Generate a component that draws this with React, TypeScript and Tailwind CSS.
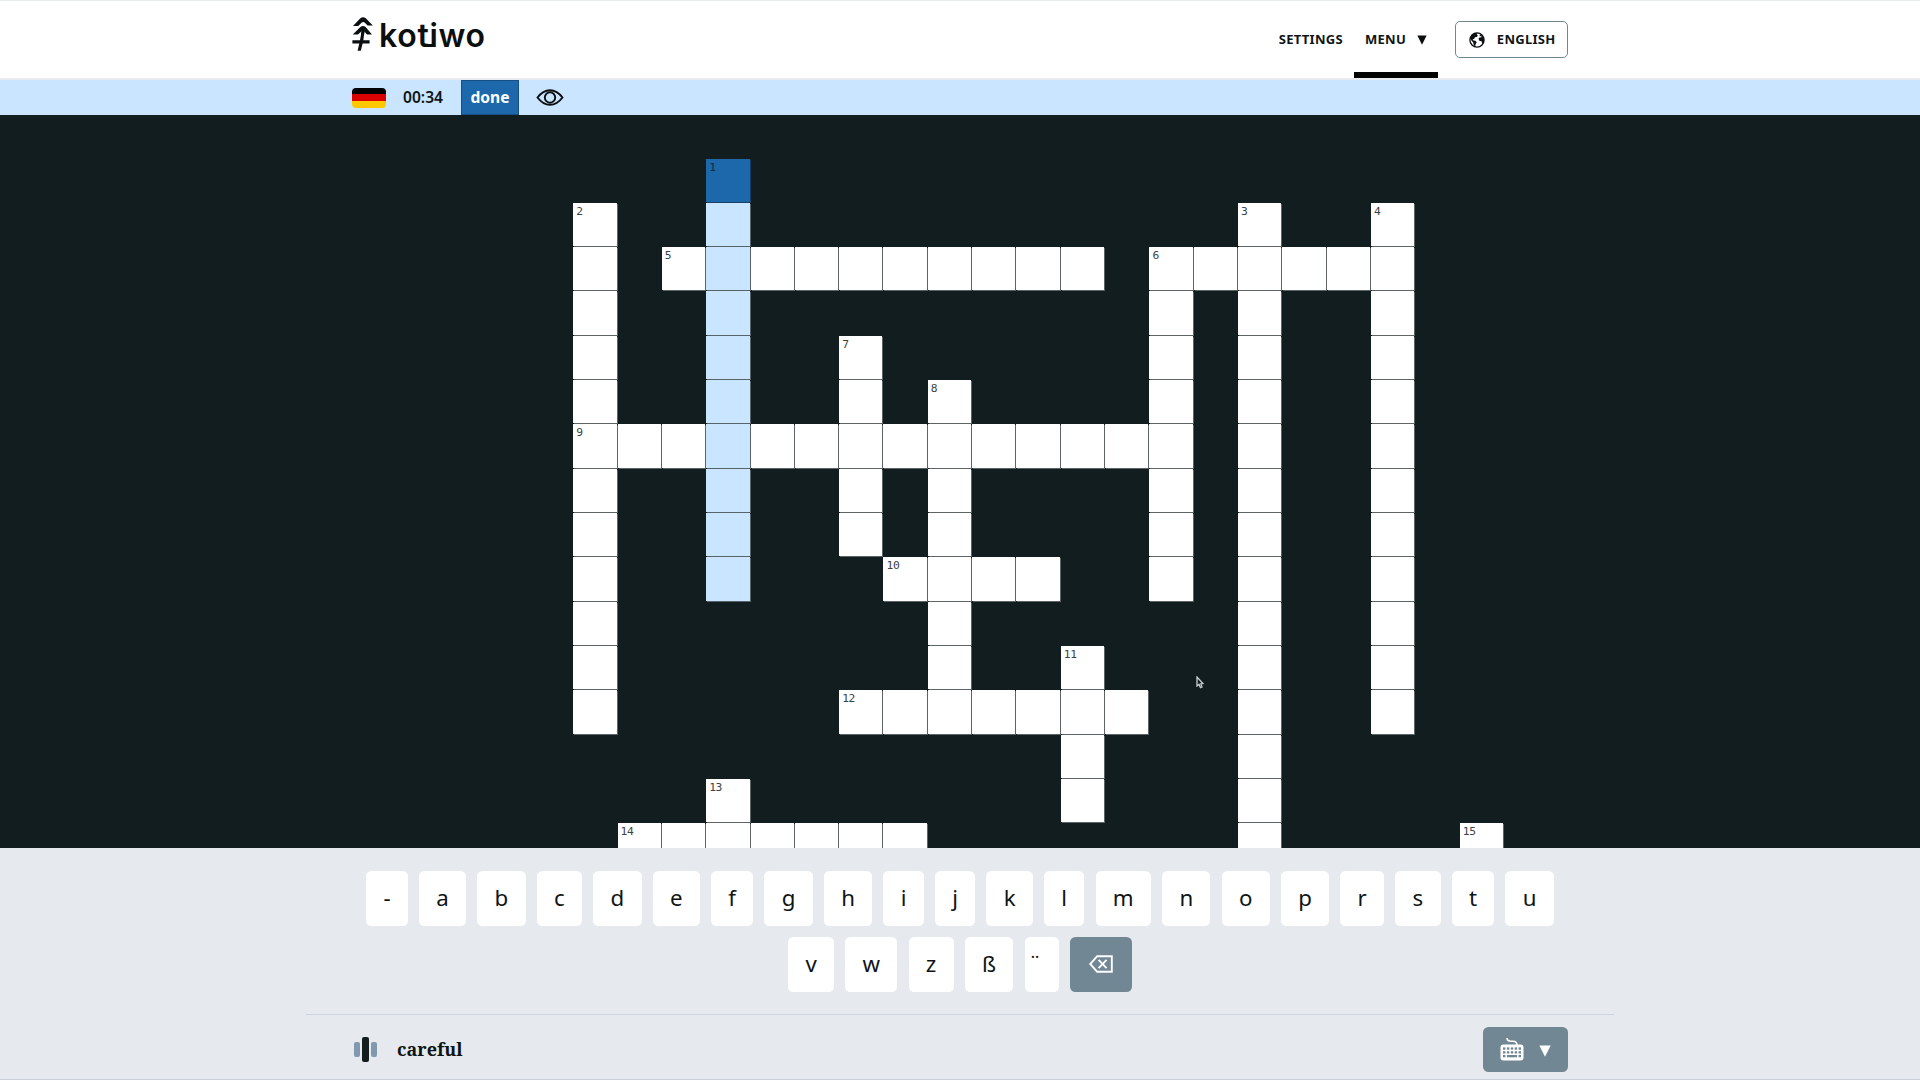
type Word = { n: number; c: number; r: number; len: number; down?: boolean };

const words: Word[] = [
  { n: 2, c: 0, r: 1, len: 12, down: true },
  { n: 3, c: 15, r: 1, len: 15, down: true },
  { n: 4, c: 18, r: 1, len: 12, down: true },
  { n: 5, c: 2, r: 2, len: 10 },
  { n: 6, c: 13, r: 2, len: 6 },
  { n: 6, c: 13, r: 2, len: 8, down: true },
  { n: 7, c: 6, r: 4, len: 5, down: true },
  { n: 8, c: 8, r: 5, len: 8, down: true },
  { n: 9, c: 0, r: 6, len: 14 },
  { n: 10, c: 7, r: 9, len: 4 },
  { n: 11, c: 11, r: 11, len: 4, down: true },
  { n: 12, c: 6, r: 12, len: 7 },
  { n: 13, c: 3, r: 14, len: 2, down: true },
  { n: 14, c: 1, r: 15, len: 7 },
  { n: 15, c: 20, r: 15, len: 1, down: true },
];

const COLS = 21;
const ROWS = 16;
const cells: { on: boolean; n?: number; active?: boolean; current?: boolean }[] = Array.from(
  { length: COLS * ROWS },
  () => ({ on: false }),
);
for (const w of words) {
  for (let i = 0; i < w.len; i++) {
    const cell = cells[(w.r + (w.down ? i : 0)) * COLS + w.c + (w.down ? 0 : i)];
    cell.on = true;
    if (i === 0) cell.n = w.n;
  }
}
for (let r = 0; r < 10; r++) {
  const cell = cells[r * COLS + 3];
  cell.on = true;
  if (r === 0) {
    cell.current = true;
    cell.n = 1;
  } else cell.active = true;
}

function Tree() {
  return (
    <svg className="mt-[15px] h-[36px] w-[22px]" viewBox="0 0 22 36" fill="#0b0f10">
      <path d="M1 10 8.4 2.2Q11 .2 13.8 2.2L20.8 9.6H15.6L12.6 6.4Q11.2 5.4 9.8 6.4L6.2 10z" />
      <path d="M.8 18.6 8.4 11Q11 9 13.6 11L20 18.4H15L12.4 15.4 12 18H9L9.6 15.2 6 18.6z" />
      <path d="M9.6 15.5H12.5L11.3 24.2H17.6V27.4H10.6L8.8 34.8H5.6L7.3 27.4H.4V24.2H8z" />
    </svg>
  );
}

function Globe() {
  return (
    <svg className="h-4 w-4" viewBox="0 0 16 16">
      <circle cx="8" cy="8" r="7.1" fill="#fff" stroke="#0b0f10" strokeWidth="1.3" />
      <path
        fill="#0b0f10"
        d="M1 6.5 3 2.8 6.2 1l2.3.3-.7 1.5 1.2.9-1.4 1.4-1.8.2-.6 1.6-1.6.3.8 1.3 2 .2 1.3 1.5-1 1.7-.5 2.6-1.6-1.5-.3-2.4-1.7-1.8zM11 2l2.5 2 1.5 3v3l-1.7 1.4-.8-2.2-2.2-.4-.8-2.2 1.5-1.4 1.5.2-.3-1.3-1.6.1z"
      />
    </svg>
  );
}

function Key({ k }: { k: string }) {
  return (
    <div className="flex h-[54.5px] items-center rounded-[5.5px] bg-white px-[17.3px] text-[22.3px] leading-none">
      {k}
    </div>
  );
}

function Keyboard() {
  const keys = [0, 1, 2, 3, 4].flatMap((i) => [
    { x: 3 + i * 3.9, y: 10.4 },
    { x: 3 + i * 3.9, y: 14.2 },
  ]);
  return (
    <svg className="-mt-px h-[24px] w-[24px]" viewBox="0 0 24 24">
      <path d="M7 1q0 3.2 4 3.2h2q4 0 4 4" fill="none" stroke="#fff" strokeWidth="1.6" />
      <rect x=".5" y="7.6" width="23" height="15.9" rx="3" fill="#fff" />
      <g fill="#728794">
        {keys.map((k, i) => (
          <rect key={i} x={k.x} y={k.y} width={2.4} height="2.3" />
        ))}
        <rect x="3" y="18" width="2.4" height="2.3" />
        <rect x="6.9" y="18" width="10.2" height="2.3" />
        <rect x="18.6" y="18" width="2.4" height="2.3" />
      </g>
    </svg>
  );
}

export default function App() {
  return (
    <div className="relative flex h-[1080px] w-[1920px] flex-col overflow-hidden bg-[#e6eaef] font-['Noto_Sans',sans-serif] text-[#0f1516]">
      <header className="flex h-[80px] shrink-0 justify-between border-t border-b-2 border-[#e8ebef] bg-white pr-[352px] pl-[352px]">
        <div className="flex">
          <Tree />
          <div className="relative mt-[12px] ml-[5px] h-10 font-['Inter',sans-serif] text-[32px] leading-[46px] font-semibold tracking-[0.7px] text-[#0b0f10]">
            kotiwo
            <span className="absolute top-[30.5px] left-[46px] h-[3.5px] w-[9px] bg-[#0b0f10]" />
          </div>
        </div>
        <div className="flex text-[13px] font-bold tracking-[0.28px]">
          <div className="mt-[28px] h-5 leading-5">SETTINGS</div>
          <div className="ml-[11px] flex h-[77px] border-b-[6px] border-black px-[11px] pt-[28px] leading-5">
            MENU
            <svg className="mt-[6px] ml-[11px] h-[10px] w-[10px]" viewBox="0 0 10 10">
              <path d="M.4.5h9.2L5 9.8z" fill="#0b0f10" />
            </svg>
          </div>
          <div className="mt-[20px] ml-[17px] flex h-[37px] w-[113px] items-center justify-between rounded-[5px] border border-[#728794] pr-[11.5px] pl-[13px]">
            <Globe />
            <span>ENGLISH</span>
          </div>
        </div>
      </header>

      <div className="flex h-[35px] shrink-0 items-center bg-[#cae5ff] pl-[352px]">
        <div className="flex h-[20px] w-[34px] flex-col overflow-hidden rounded-[4px]">
          <div className="h-[6px] bg-black" />
          <div className="h-[7px] bg-[#d80000]" />
          <div className="h-[7px] bg-[#ffc800]" />
        </div>
        <div className="ml-[17px] w-[58px] text-[15.6px] font-semibold">00:34</div>
        <div className="flex h-[35px] w-[58px] items-center justify-center border border-[#174f85] bg-[#1d67ab] text-[15.6px] font-bold text-white">
          done
        </div>
        <svg className="ml-[17px] h-[17px] w-[28px]" viewBox="0 0 28 17" fill="none" stroke="#0b0f10" strokeWidth="1.9">
          <path d="M1.5 8.5Q7 1.2 14 1.2t12.5 7.3Q21 15.8 14 15.8T1.5 8.5z" />
          <circle cx="14" cy="8.5" r="5.2" />
        </svg>
      </div>

      <main className="h-[733px] shrink-0 overflow-hidden bg-[#121d1f] pt-[43.5px] pl-[573.2px]">
        <div className="grid w-max auto-rows-[43.33px] grid-cols-[repeat(21,43.33px)] gap-px">
          {cells.map((cell, i) =>
            cell.on ? (
              <div
                key={i}
                className={
                  "pt-[2px] pl-[3px] font-['DejaVu_Sans_Mono',monospace] text-[11.3px] leading-[13px] tracking-[-0.4px] " +
                  (cell.current
                    ? 'bg-[#1d67ab] text-[#0c2c4c] shadow-[1px_1px_0_#184067]'
                    : cell.active
                      ? 'bg-[#cae5ff] shadow-[1px_1px_0_#566369]'
                      : 'bg-white text-[#3b4345] shadow-[1px_1px_0_#5c6466]')
                }
              >
                {cell.n}
              </div>
            ) : (
              <div key={i} />
            ),
          )}
        </div>
      </main>

      <section className="flex h-[166px] shrink-0 flex-col items-center gap-[11.5px] pt-[23px]">
        <div className="flex gap-[11.15px]">
          {'-abcdefghijklmnoprstu'.split('').map((k) => (
            <Key key={k} k={k} />
          ))}
        </div>
        <div className="flex gap-[11.15px]">
          {'vwzß'.split('').map((k) => (
            <Key key={k} k={k} />
          ))}
          <div className="flex h-[54.5px] w-[34.6px] items-center rounded-[5.5px] bg-white pl-[4px] text-[22.3px] leading-none">
            ¨
          </div>
          <div className="flex h-[54.5px] w-[61.5px] items-center justify-center rounded-[5.5px] bg-[#728794]">
            <svg className="h-[18px] w-[24px]" viewBox="0 0 24 18" fill="none" stroke="#fff" strokeWidth="1.9">
              <path d="M8.2 1.2H22.8V16.8H8.2L1.2 9zM9.6 4.8l8 8.4M17.6 4.8l-8 8.4" />
            </svg>
          </div>
        </div>
      </section>

      <footer className="mx-[306px] flex h-[66px] items-center justify-between border-t border-[#cdd6de] pr-[46px] pl-[48px]">
        <div className="flex items-center pt-[4px]">
          <div className="flex items-center gap-[2px]">
            <div className="h-[15px] w-[6px] rounded-[2px] bg-[#8099ae]" />
            <div className="h-[25px] w-[7px] rounded-[2px] bg-[#131d1f]" />
            <div className="h-[15px] w-[6px] rounded-[2px] bg-[#8099ae]" />
          </div>
          <div className="ml-[20px] font-['Noto_Serif','DejaVu_Serif',serif] text-[18px] font-bold">careful</div>
        </div>
        <div className="mt-[4px] flex h-[45px] w-[85px] items-center rounded-[5.5px] bg-[#728794] pl-[17px]">
          <Keyboard />
          <svg className="mt-[3px] ml-[15px] h-[12px] w-[12px]" viewBox="0 0 12 12">
            <path d="M.4.4h11.2L6 11.8z" fill="#fff" />
          </svg>
        </div>
      </footer>
      <div className="absolute inset-x-0 bottom-0 h-px bg-[#c9d0d7]" />
      <svg className="absolute top-[676px] left-[1196px] h-[13px] w-[8px]" viewBox="0 0 8 13">
        <path d="M1 1v9l2-1.6L4.4 11.6 6 10.9 4.8 7.9 7 7.6z" fill="#131d1f" stroke="#c9d0d2" strokeWidth="1.3" />
      </svg>
    </div>
  );
}
